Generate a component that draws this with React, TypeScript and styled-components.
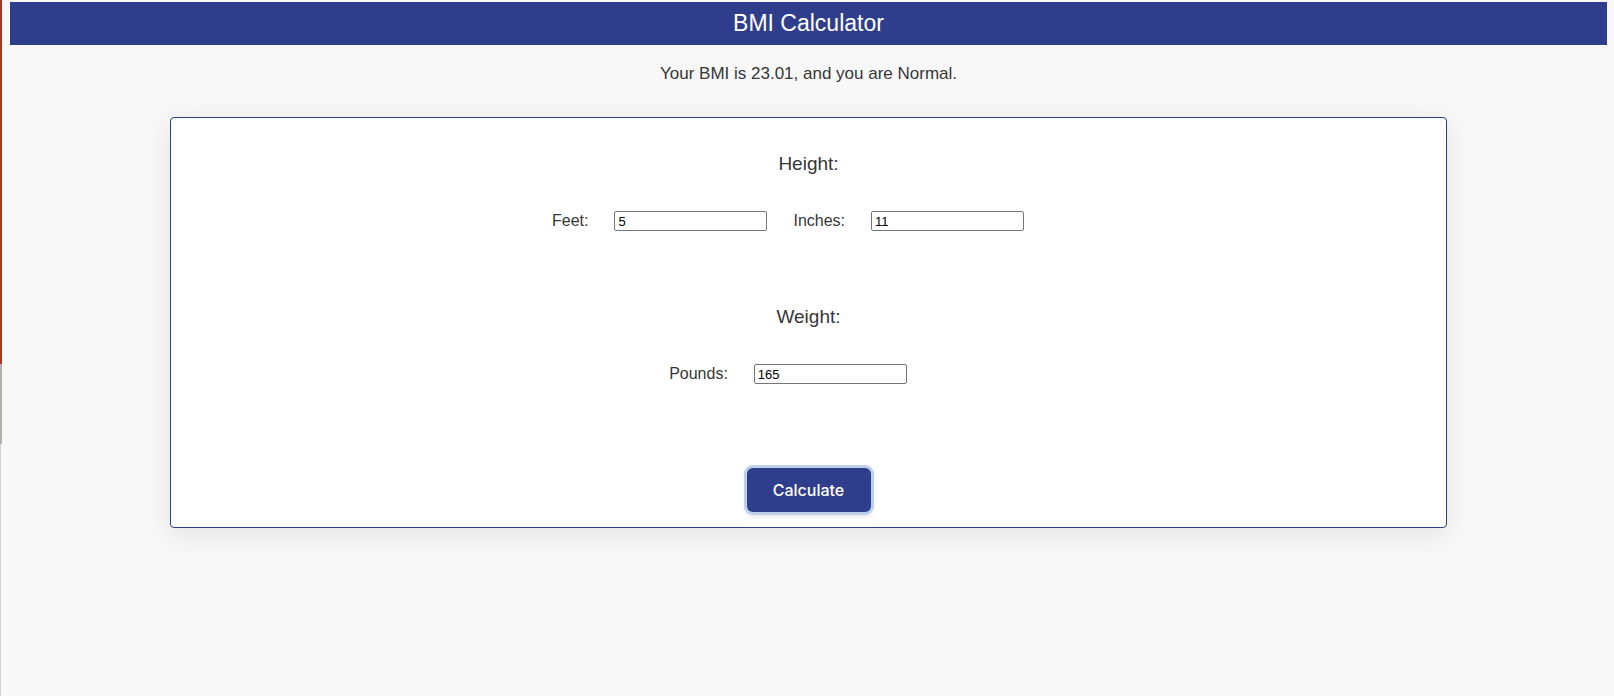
import React, { useState } from "react";
import styled, { createGlobalStyle } from "styled-components";

const navy = "#2f3e8c";
const ink = "#363636";

const GlobalStyle = createGlobalStyle`
  html, body {
    margin: 0;
    padding: 0;
    background-color: #f8f8f8;
  }
  body {
    min-height: 100vh;
    font-family: "Liberation Sans", Arial, Helvetica, sans-serif;
    background-image:
      linear-gradient(#a3391f, #a3391f),
      linear-gradient(#b3afab, #b3afab),
      linear-gradient(#d6d4d2, #d6d4d2);
    background-repeat: no-repeat;
    background-size: 2px 364px, 2px 80px, 1px 260px;
    background-position: 0 0, 0 364px, 0 444px;
  }
`;

const Page = styled.div`
  padding: 2px 7px 0 10px;
`;

const Header = styled.header`
  height: 43px;
  background-color: ${navy};
  color: #fff;
  font-size: 23px;
  line-height: 43px;
  text-align: center;
`;

const Result = styled.p`
  margin: 19px 0 33px;
  font-size: 17px;
  line-height: 20px;
  color: ${ink};
  text-align: center;
`;

const Card = styled.form`
  width: 80%;
  margin: 0 auto;
  box-sizing: border-box;
  padding: 35px 0 15px;
  background-color: #fff;
  border: 1px solid ${navy};
  border-radius: 4px;
  box-shadow: 0 6px 28px rgba(0, 0, 0, 0.09);
  display: flex;
  flex-direction: column;
  align-items: center;
`;

const Section = styled.section`
  display: flex;
  flex-direction: column;
  align-items: center;
  gap: 36px;
  margin-bottom: 75px;
  &:last-of-type {
    margin-bottom: 84px;
  }
`;

const SectionTitle = styled.h3`
  margin: 0;
  font-size: 19px;
  line-height: 22px;
  font-weight: 400;
  color: ${ink};
`;

const Row = styled.div`
  display: flex;
  align-items: center;
  gap: 26px;
  padding-right: 41px;
`;

const Field = styled.label`
  display: flex;
  align-items: center;
  gap: 26px;
  font-size: 16px;
  line-height: 18px;
  color: ${ink};
`;

const Input = styled.input`
  width: 153px;
  height: 20px;
  box-sizing: border-box;
  padding: 1px 3px;
  border: 1px solid #767676;
  border-radius: 2px;
  font-family: "Liberation Sans", Arial, sans-serif;
  font-size: 13px;
  color: #000;
  background: #fff;
  outline: none;
`;

const Button = styled.button`
  width: 124px;
  height: 44px;
  border: none;
  border-radius: 6px;
  background-color: ${navy};
  color: #fff;
  font-family: Inter, "Liberation Sans", sans-serif;
  font-size: 16px;
  font-weight: 500;
  cursor: pointer;
  box-shadow: 0 0 0 3px #bcd0ea, 0 3px 6px rgba(0, 0, 0, 0.18);
`;

const App: React.FC = () => {
  const [feet, setFeet] = useState("5");
  const [inches, setInches] = useState("11");
  const [pounds, setPounds] = useState("165");

  return (
    <>
      <GlobalStyle />
      <Page>
        <Header>BMI Calculator</Header>
        <Result>Your BMI is 23.01, and you are Normal.</Result>
        <Card onSubmit={(e) => e.preventDefault()}>
          <Section>
            <SectionTitle>Height:</SectionTitle>
            <Row>
              <Field>
                Feet:
                <Input value={feet} onChange={(e) => setFeet(e.target.value)} />
              </Field>
              <Field>
                Inches:
                <Input
                  value={inches}
                  onChange={(e) => setInches(e.target.value)}
                />
              </Field>
            </Row>
          </Section>
          <Section>
            <SectionTitle>Weight:</SectionTitle>
            <Row>
              <Field>
                Pounds:
                <Input
                  value={pounds}
                  onChange={(e) => setPounds(e.target.value)}
                />
              </Field>
            </Row>
          </Section>
          <Button type="submit">Calculate</Button>
        </Card>
      </Page>
    </>
  );
};

export default App;
